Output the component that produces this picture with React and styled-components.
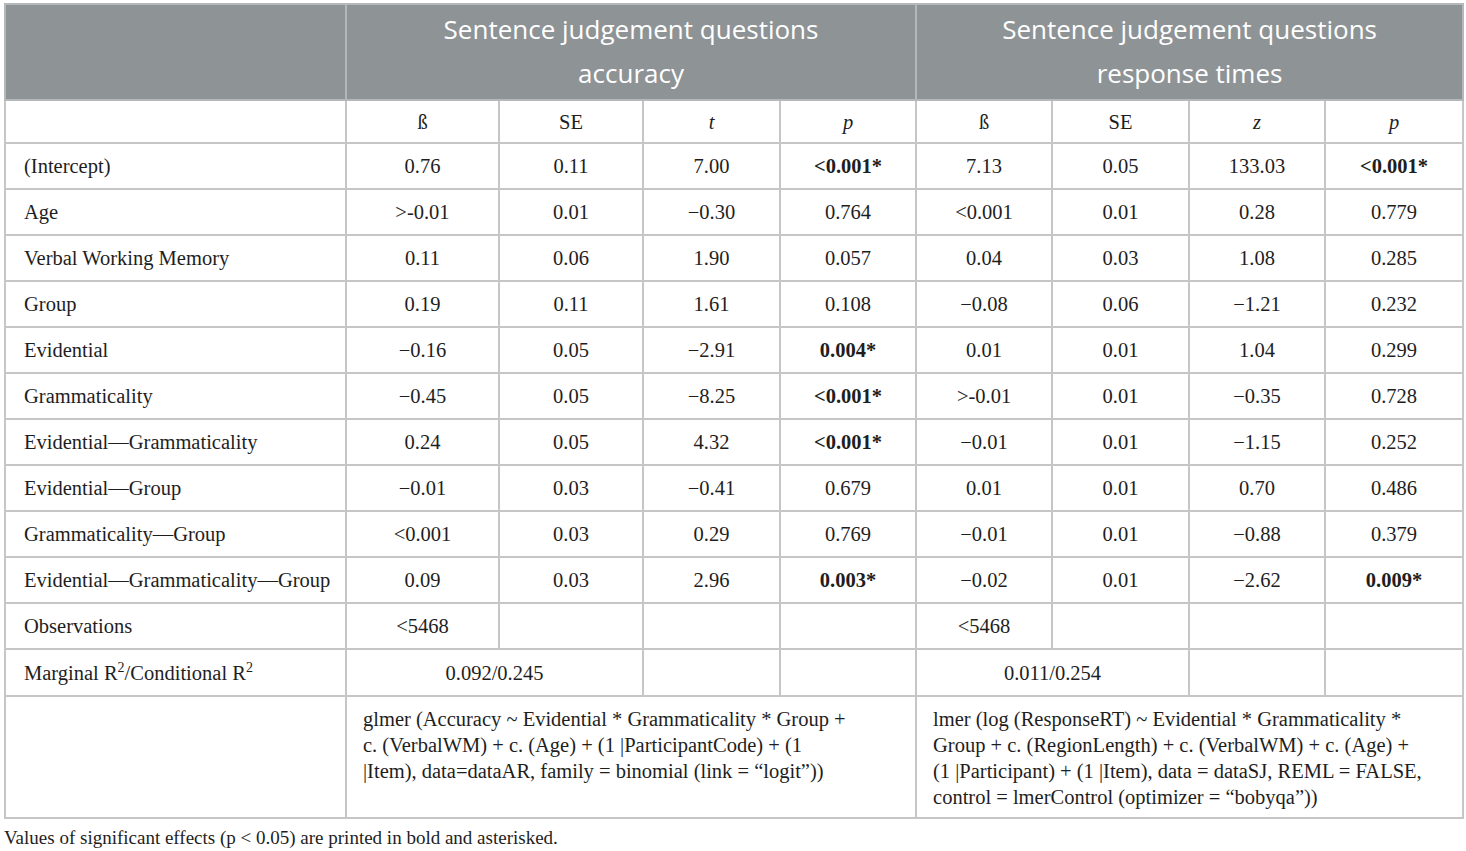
import React from "react";
import styled, { createGlobalStyle, css } from "styled-components";

const GlobalStyle = createGlobalStyle`
  body {
    margin: 0;
    background: #fff;
    font-family: "Liberation Serif", "Times New Roman", serif;
    color: #1e1e1e;
  }
`;

const Page = styled.div`
  padding: 3px 4px 0;
`;

const Table = styled.table`
  width: 1458px;
  table-layout: fixed;
  border-collapse: collapse;
  font-size: 20.5px;
`;

const HeadRow = styled.tr`
  height: 96px;
`;

const HeadCell = styled.th`
  background-color: #8e9396;
  color: #fff;
  font-family: "Open Sans", "Noto Sans", sans-serif;
  font-weight: 400;
  font-size: 26px;
  line-height: 44px;
  padding: 0 0 2px;
  border: 2px solid #b4b8ba;
  text-align: center;
  vertical-align: middle;
`;

const Row = styled.tr`
  height: ${(props) => props.h || 46}px;
`;

const Cell = styled.td`
  border: 2px solid #c6c6c6;
  padding: 0 18px;
  text-align: ${(props) => (props.left ? "left" : "center")};
  vertical-align: middle;
  line-height: 26px;
  white-space: nowrap;

  ${(props) =>
    props.bold &&
    css`
      font-weight: 700;
    `};

  ${(props) =>
    props.italic &&
    css`
      font-style: italic;
    `};
`;

const Formula = styled(Cell)`
  text-align: left;
  vertical-align: top;
  padding: 9px 16px 0;
  white-space: normal;
`;

const Sup = styled.sup`
  font-size: 14px;
  line-height: 0;
`;

const Note = styled.p`
  margin: 8px 0 0;
  font-size: 19px;
  line-height: 22px;
`;

const rows = [
  ["(Intercept)", "0.76", "0.11", "7.00", "<0.001*", "7.13", "0.05", "133.03", "<0.001*"],
  ["Age", ">-0.01", "0.01", "\u22120.30", "0.764", "<0.001", "0.01", "0.28", "0.779"],
  ["Verbal Working Memory", "0.11", "0.06", "1.90", "0.057", "0.04", "0.03", "1.08", "0.285"],
  ["Group", "0.19", "0.11", "1.61", "0.108", "\u22120.08", "0.06", "\u22121.21", "0.232"],
  ["Evidential", "\u22120.16", "0.05", "\u22122.91", "0.004*", "0.01", "0.01", "1.04", "0.299"],
  ["Grammaticality", "\u22120.45", "0.05", "\u22128.25", "<0.001*", ">-0.01", "0.01", "\u22120.35", "0.728"],
  ["Evidential\u2014Grammaticality", "0.24", "0.05", "4.32", "<0.001*", "\u22120.01", "0.01", "\u22121.15", "0.252"],
  ["Evidential\u2014Group", "\u22120.01", "0.03", "\u22120.41", "0.679", "0.01", "0.01", "0.70", "0.486"],
  ["Grammaticality\u2014Group", "<0.001", "0.03", "0.29", "0.769", "\u22120.01", "0.01", "\u22120.88", "0.379"],
  ["Evidential\u2014Grammaticality\u2014Group", "0.09", "0.03", "2.96", "0.003*", "\u22120.02", "0.01", "\u22122.62", "0.009*"],
  ["Observations", "<5468", "", "", "", "<5468", "", "", ""],
];

const colWidths = [341, 153, 144, 137, 136, 136, 137, 136, 138];

const App = () => {
  return (
    <Page>
      <GlobalStyle />
      <Table>
        <colgroup>
          {colWidths.map((w, i) => (
            <col key={i} style={{ width: w }} />
          ))}
        </colgroup>
        <thead>
          <HeadRow>
            <HeadCell />
            <HeadCell colSpan={4}>
              Sentence judgement questions
              <br />
              accuracy
            </HeadCell>
            <HeadCell colSpan={4}>
              Sentence judgement questions
              <br />
              response times
            </HeadCell>
          </HeadRow>
        </thead>
        <tbody>
          <Row h={43}>
            <Cell />
            <Cell>ß</Cell>
            <Cell>SE</Cell>
            <Cell italic>t</Cell>
            <Cell italic>p</Cell>
            <Cell>ß</Cell>
            <Cell>SE</Cell>
            <Cell italic>z</Cell>
            <Cell italic>p</Cell>
          </Row>
          {rows.map((row) => (
            <Row key={row[0]}>
              {row.map((value, i) => (
                <Cell key={i} left={i === 0} bold={value.endsWith("*")}>
                  {value}
                </Cell>
              ))}
            </Row>
          ))}
          <Row h={47}>
            <Cell left>
              Marginal R<Sup>2</Sup>/Conditional R<Sup>2</Sup>
            </Cell>
            <Cell colSpan={2}>0.092/0.245</Cell>
            <Cell />
            <Cell />
            <Cell colSpan={2}>0.011/0.254</Cell>
            <Cell />
            <Cell />
          </Row>
          <Row h={122}>
            <Cell />
            <Formula colSpan={4}>
              glmer (Accuracy ~ Evidential * Grammaticality * Group +
              <br />
              c. (VerbalWM) + c. (Age) + (1 |ParticipantCode) + (1
              <br />
              |Item), data=dataAR, family = binomial (link = “logit”))
            </Formula>
            <Formula colSpan={4}>
              lmer (log (ResponseRT) ~ Evidential * Grammaticality *
              <br />
              Group + c. (RegionLength) + c. (VerbalWM) + c. (Age) +
              <br />
              (1 |Participant) + (1 |Item), data = dataSJ, REML = FALSE,
              <br />
              control = lmerControl (optimizer = “bobyqa”))
            </Formula>
          </Row>
        </tbody>
      </Table>
      <Note>Values of significant effects (p &lt; 0.05) are printed in bold and asterisked.</Note>
    </Page>
  );
};

export default App;
